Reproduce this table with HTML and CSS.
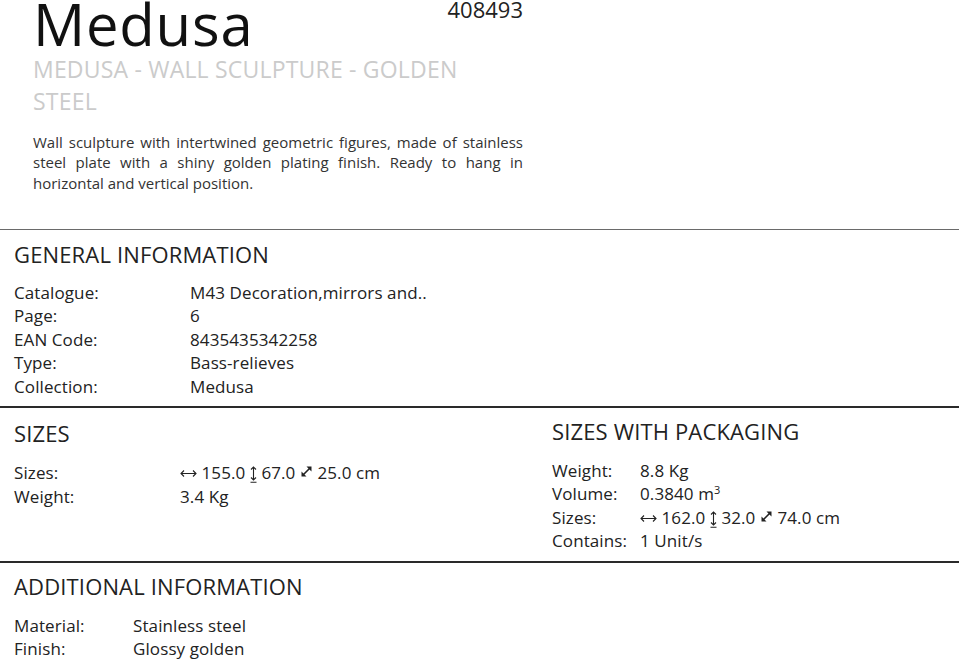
FILE: index.html
```html
<!DOCTYPE html>
<html lang="en">
<head>
<meta charset="utf-8">
<title>Medusa</title>
<link rel="stylesheet" href="styles.css">
</head>
<body>
<header class="intro">
  <div class="intro-inner">
    <div class="title-row">
      <h1 class="title">Medusa</h1>
      <span class="ref">408493</span>
    </div>
    <h2 class="subtitle">MEDUSA - WALL SCULPTURE - GOLDEN STEEL</h2>
    <p class="desc">Wall sculpture with intertwined geometric figures, made of stainless steel plate with a shiny golden plating finish. Ready to hang in horizontal and vertical position.</p>
  </div>
</header>

<section class="block block-general">
  <h3 class="block-title">GENERAL INFORMATION</h3>
  <dl class="rows rows-general">
    <dt>Catalogue:</dt><dd>M43 Decoration,mirrors and..</dd>
    <dt>Page:</dt><dd>6</dd>
    <dt>EAN Code:</dt><dd>8435435342258</dd>
    <dt>Type:</dt><dd>Bass-relieves</dd>
    <dt>Collection:</dt><dd>Medusa</dd>
  </dl>
</section>

<section class="block block-sizes">
  <div class="col col-left">
    <h3 class="block-title">SIZES</h3>
    <dl class="rows rows-sizes">
      <dt>Sizes:</dt>
      <dd><svg class="ic ic-h" width="17" height="9" viewBox="0 0 17 9" aria-hidden="true"><path d="M1 4.5H16M4 1.5L1 4.5L4 7.5M13 1.5L16 4.5L13 7.5" fill="none" stroke="#222" stroke-width="1.1"/></svg> 155.0 <svg class="ic ic-v" width="7" height="17" viewBox="0 0 7 17" aria-hidden="true"><path d="M3.5 1V14M1 3.5L3.5 1L6 3.5M1 11.5L3.5 14L6 11.5M0.5 16.2H6.5" fill="none" stroke="#222" stroke-width="1.1"/></svg> 67.0 <svg class="ic ic-d" width="11" height="11" viewBox="0 0 11 11" aria-hidden="true"><path d="M2.5 8.5L8.5 2.5" stroke="#222" stroke-width="1.6"/><path d="M10.5 0.5L10.5 5.5L5.5 0.5Z M0.5 10.5L0.5 5.5L5.5 10.5Z" fill="#222"/></svg> 25.0 cm</dd>
      <dt>Weight:</dt><dd>3.4 Kg</dd>
    </dl>
  </div>
  <div class="col col-right">
    <h3 class="block-title">SIZES WITH PACKAGING</h3>
    <dl class="rows rows-pack">
      <dt>Weight:</dt><dd>8.8 Kg</dd>
      <dt>Volume:</dt><dd>0.3840 m<span class="sup">3</span></dd>
      <dt>Sizes:</dt>
      <dd><svg class="ic ic-h" width="17" height="9" viewBox="0 0 17 9" aria-hidden="true"><path d="M1 4.5H16M4 1.5L1 4.5L4 7.5M13 1.5L16 4.5L13 7.5" fill="none" stroke="#222" stroke-width="1.1"/></svg> 162.0 <svg class="ic ic-v" width="7" height="17" viewBox="0 0 7 17" aria-hidden="true"><path d="M3.5 1V14M1 3.5L3.5 1L6 3.5M1 11.5L3.5 14L6 11.5M0.5 16.2H6.5" fill="none" stroke="#222" stroke-width="1.1"/></svg> 32.0 <svg class="ic ic-d" width="11" height="11" viewBox="0 0 11 11" aria-hidden="true"><path d="M2.5 8.5L8.5 2.5" stroke="#222" stroke-width="1.6"/><path d="M10.5 0.5L10.5 5.5L5.5 0.5Z M0.5 10.5L0.5 5.5L5.5 10.5Z" fill="#222"/></svg> 74.0 cm</dd>
      <dt>Contains:</dt><dd>1 Unit/s</dd>
    </dl>
  </div>
</section>

<section class="block block-additional">
  <h3 class="block-title">ADDITIONAL INFORMATION</h3>
  <dl class="rows rows-add">
    <dt>Material:</dt><dd>Stainless steel</dd>
    <dt>Finish:</dt><dd>Glossy golden</dd>
  </dl>
</section>
</body>
</html>
```

FILE: styles.css
```css
* { box-sizing: border-box; }

html, body {
  margin: 0;
  padding: 0;
  background: #ffffff;
}

body {
  font-family: "Open Sans", "Liberation Sans", sans-serif;
  color: #222222;
  width: 959px;
  overflow: hidden;
}

h1, h2, h3, p, dl, dd, dt { margin: 0; padding: 0; font-weight: 400; }

.intro {
  padding: 0 0 36px 33px;
  border-bottom: 1px solid #6a6a6a;
}

.intro-inner {
  width: 490px;
}

.title-row {
  display: flex;
  justify-content: space-between;
  align-items: flex-start;
}

.title {
  font-size: 58px;
  line-height: 47px;
  letter-spacing: 0.8px;
  color: #111111;
}

.ref {
  font-size: 22px;
  line-height: 19px;
  color: #222222;
}

.subtitle {
  margin-top: 6px;
  padding-right: 25px;
  font-size: 23px;
  line-height: 32px;
  letter-spacing: 0.2px;
  color: #cbcbcb;
}

.desc {
  margin-top: 15px;
  font-size: 15px;
  line-height: 20.3px;
  color: #333333;
  text-align: justify;
}

.block {
  padding: 9px 14px 8px 14px;
}

.block-general {
  padding-bottom: 8px;
  border-bottom: 2px solid #2a2a2a;
}

.block-sizes {
  display: flex;
  border-bottom: 2px solid #2a2a2a;
  padding-top: 10px;
  padding-bottom: 8px;
}

.block-additional {
  padding-top: 8px;
}

.col-left { width: 538px; }
.col-right { flex: 1; margin-top: -2.5px; }

.block-title {
  font-size: 22px;
  line-height: 30px;
  letter-spacing: 0.15px;
  color: #222222;
}

.rows {
  margin-top: 12px;
  display: grid;
  font-size: 17px;
  line-height: 23.5px;
  letter-spacing: 0.1px;
  color: #222222;
}

.rows-sizes,
.rows-pack,
.rows-add { margin-top: 13px; }

.rows-general { grid-template-columns: 176px 1fr; }
.rows-sizes { grid-template-columns: 166px 1fr; }
.rows-pack { grid-template-columns: 88px 1fr; }
.rows-add { grid-template-columns: 119px 1fr; }

.sup {
  font-size: 11px;
  vertical-align: 6px;
  line-height: 0;
}

.ic {
  display: inline-block;
}

.ic-h { vertical-align: 1px; }
.ic-v { vertical-align: -4px; }
.ic-d { vertical-align: 2px; margin: 0 1px; }
```
